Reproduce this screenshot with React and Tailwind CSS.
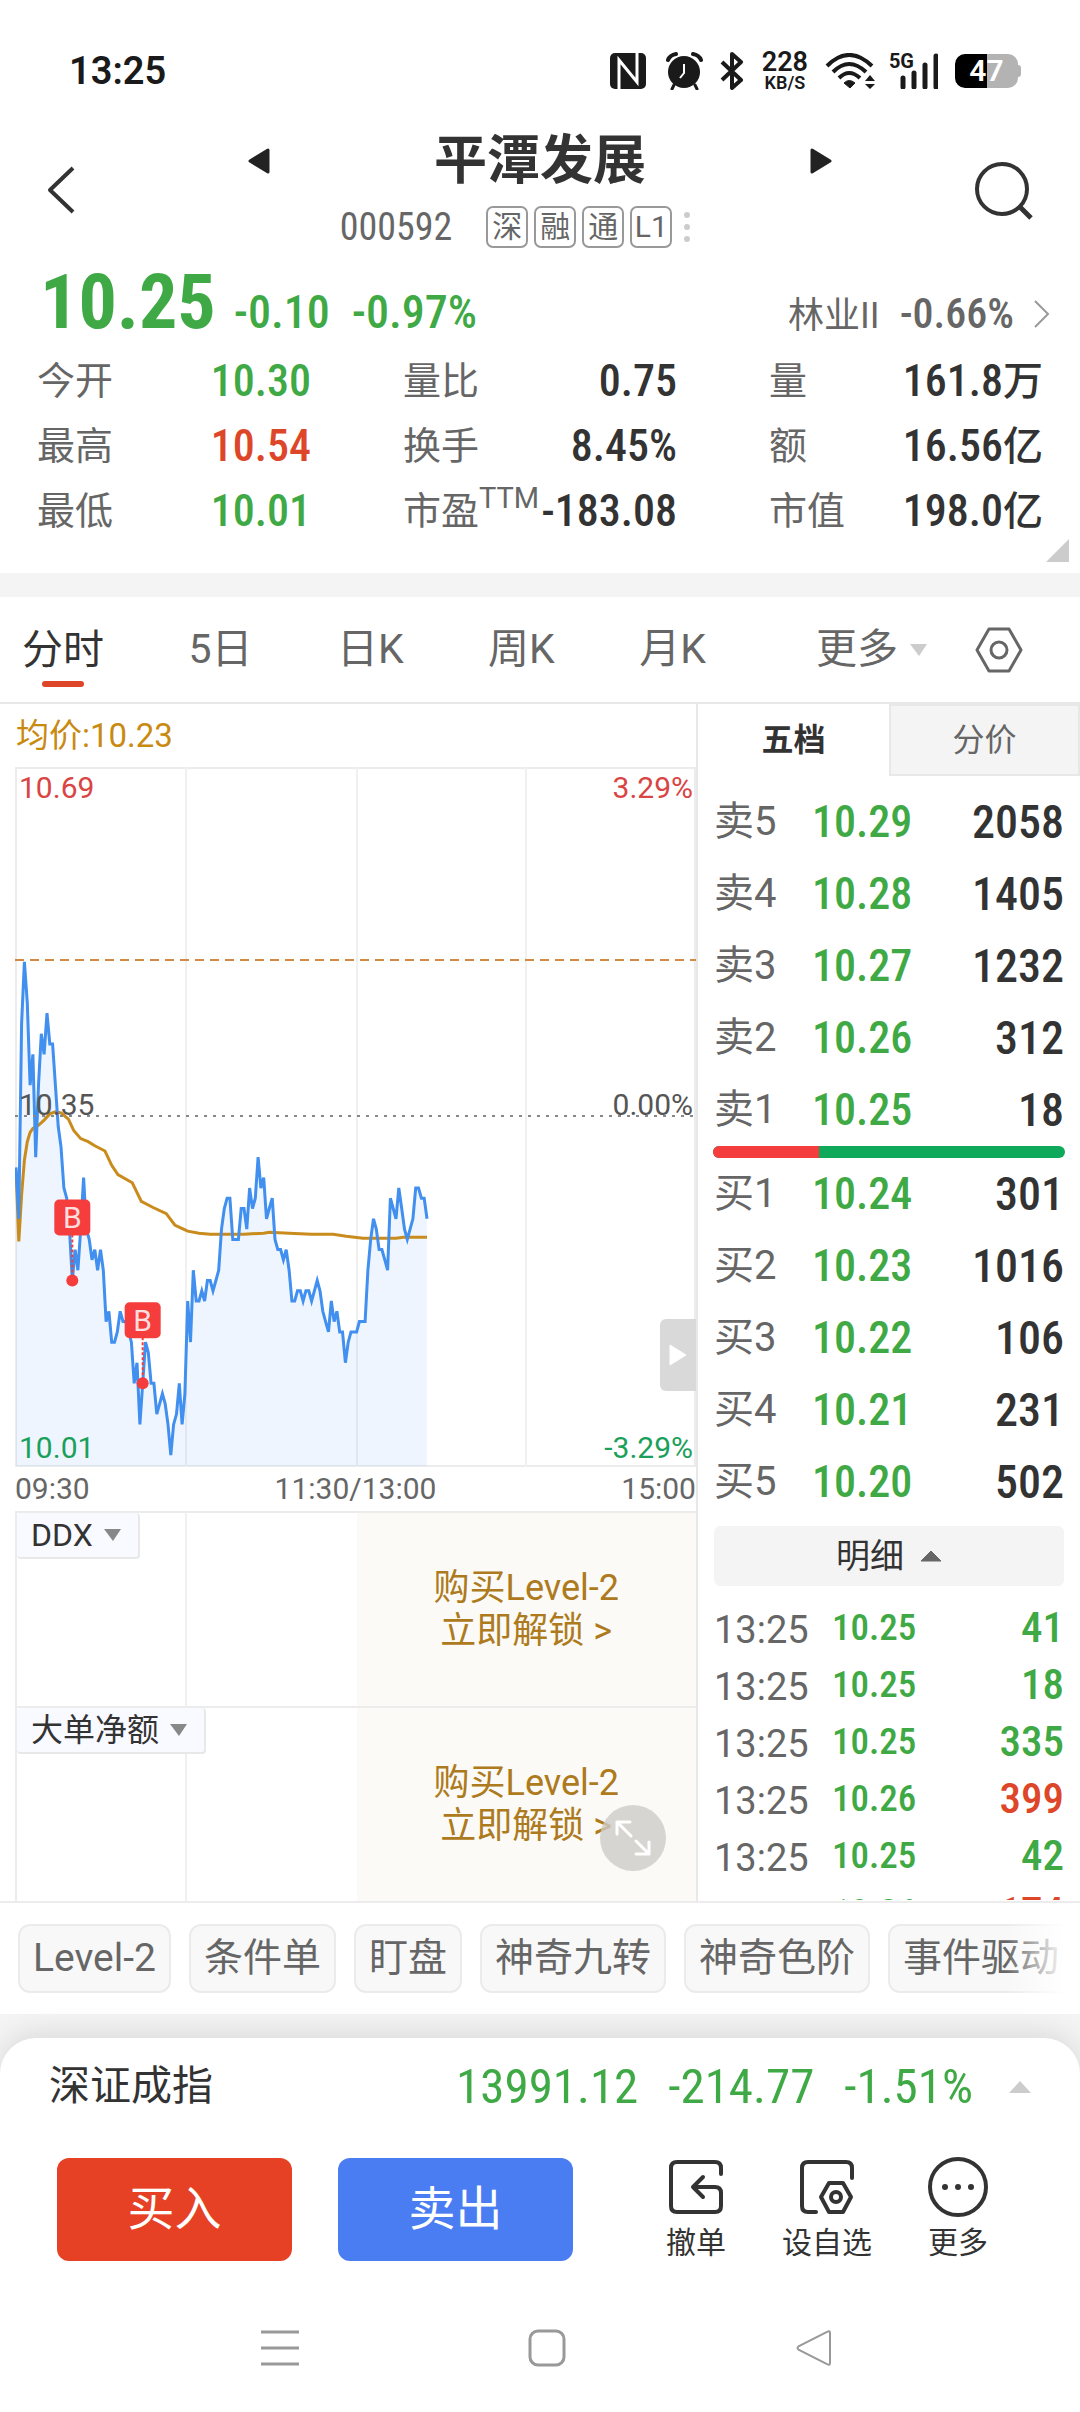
import React from 'react';

const SELLS = [
    { label: '卖5', price: '10.29', volume: '2058' },
    { label: '卖4', price: '10.28', volume: '1405' },
    { label: '卖3', price: '10.27', volume: '1232' },
    { label: '卖2', price: '10.26', volume: '312' },
    { label: '卖1', price: '10.25', volume: '18' },
];

const BUYS = [
    { label: '买1', price: '10.24', volume: '301' },
    { label: '买2', price: '10.23', volume: '1016' },
    { label: '买3', price: '10.22', volume: '106' },
    { label: '买4', price: '10.21', volume: '231' },
    { label: '买5', price: '10.20', volume: '502' },
];

const TICKS = [
    { time: '13:25', price: '10.25', volume: '41', up: false },
    { time: '13:25', price: '10.25', volume: '18', up: false },
    { time: '13:25', price: '10.25', volume: '335', up: false },
    { time: '13:25', price: '10.26', volume: '399', up: true },
    { time: '13:25', price: '10.25', volume: '42', up: false },
    { time: '13:25', price: '10.26', volume: '174', up: true },
];

const STATS = [
    { label: '今开', value: '10.30', color: 'text-[#3fa945]' },
    { label: '量比', value: '0.75', color: 'text-[#333]' },
    { label: '量', value: '161.8', unit: '万', color: 'text-[#333]' },
    { label: '最高', value: '10.54', color: 'text-[#dd4628]' },
    { label: '换手', value: '8.45%', color: 'text-[#333]' },
    { label: '额', value: '16.56', unit: '亿', color: 'text-[#333]' },
    { label: '最低', value: '10.01', color: 'text-[#3fa945]' },
    { label: '市盈', sup: 'TTM', value: '-183.08', color: 'text-[#333]' },
    { label: '市值', value: '198.0', unit: '亿', color: 'text-[#333]' },
];

const CHIPS = ['Level-2', '条件单', '盯盘', '神奇九转', '神奇色阶', '事件驱动'];

// one price per minute, in cents above 10.00
const PRICES = [
    30, 25, 44, 50, 46, 38, 41, 31, 38, 43, 41, 45, 42, 42, 38, 34, 32, 28, 27, 24,
    19, 22, 20, 24, 29, 24, 23, 21, 22, 20, 22, 20, 15, 16, 13, 13, 14, 16, 15, 15,
    14, 13, 9, 11, 5, 9, 13, 12, 9, 9, 6, 7, 8, 7, 5, 2, 5, 6, 9, 5,
    8, 17, 13, 20, 17, 17, 18, 17, 19, 19, 18, 19, 20, 24, 26, 27, 27, 23, 23, 23,
    26, 26, 24, 28, 26, 27, 31, 28, 29, 25, 26, 27, 23, 22, 22, 21, 22, 20, 17, 17,
    18, 18, 17, 18, 18, 17, 18, 19, 18, 16, 15, 14, 17, 15, 16, 14, 14, 11, 13, 14,
    14, 14, 15, 15, 15, 20, 23, 25, 24, 22, 22, 21, 20, 27, 26, 25, 28, 26, 24, 23,
    24, 25, 28, 28, 27, 27, 25,
];

// [minute, cents above 10.00]
const AVERAGES = [
    [0, 29.8], [1, 22.8], [2, 27.3], [3, 30.7], [4, 32.5], [5, 33.4], [6, 33.8], [8, 34.1], [10, 34.6],
    [12, 35.2], [14, 35.4], [16, 35.3], [18.6, 34.7], [20.5, 33.6], [23, 32.8], [25.6, 32.5], [28, 32.1],
    [31.6, 31.6], [34, 30.2], [36.2, 29.3], [41.3, 28.5], [44.5, 26.7], [48.7, 26.1], [53.4, 25.5],
    [56.4, 24.4], [58.7, 24.1], [61, 23.8], [65, 23.6], [69, 23.5], [81, 23.5], [88, 23.6], [90, 23.7],
    [97, 23.6], [105, 23.5], [112.6, 23.5], [117.3, 23.3], [123.3, 23.1], [135, 23.1], [137.5, 23.2], [146, 23.2],
];

const chartX = (minute) => 1 + minute * 2.815;
const chartY = (cents) => 349 + (35 - cents) * 10.28;

const toPoints = (list) => list.map(([m, c]) => `${chartX(m).toFixed(1)},${chartY(c).toFixed(1)}`).join(' ');

const NUM = "font-['Roboto_Condensed','Liberation_Sans_Narrow',Roboto,sans-serif]";

const StatusBar = () => (
    <div className="flex h-[131px] items-center justify-between pt-[10px] pl-[69px] pr-[59px] text-[#1a1a1a]">
        <span className="text-[38px] font-semibold leading-none">13:25</span>
        <div className="flex items-center">
            <svg width="36" height="36" viewBox="0 0 36 36">
                <rect width="36" height="36" rx="5" fill="#1a1a1a" />
                <path d="M9 36V7l18 22V0" fill="none" stroke="#fff" strokeWidth="3" />
            </svg>
            <svg className="ml-5" width="37" height="38" viewBox="0 0 37 38">
                <circle cx="18" cy="20" r="16" fill="#1a1a1a" />
                <path d="M2 8Q4 3 10 2M35 8Q33 3 27 2" fill="none" stroke="#1a1a1a" strokeWidth="4" strokeLinecap="round" />
                <path d="M8 33l-2 4M29 33l2 4" stroke="#1a1a1a" strokeWidth="3" strokeLinecap="round" />
                <path d="M18 12v9l-4 5" fill="none" stroke="#fff" strokeWidth="2" />
            </svg>
            <svg className="ml-[17px]" width="24" height="38" viewBox="0 0 24 38">
                <path d="M2 10l19 18-9 8V2l9 8L2 28" fill="none" stroke="#1a1a1a" strokeWidth="4" strokeLinejoin="round" />
            </svg>
            <div className="ml-[16px] flex w-[50px] flex-col items-center">
                <span className="text-[27px] font-semibold leading-[24px]">228</span>
                <span className="text-[18px] font-semibold leading-[18px]">KB/S</span>
            </div>
            <svg className="ml-[15px]" width="52" height="36" viewBox="0 0 52 36">
                <g fill="none" stroke="#1a1a1a" strokeWidth="4">
                    <path d="M2 13Q24 -9 47 13" />
                    <path d="M8 19Q24 3 41 19" />
                    <path d="M14 25Q24 15 35 25" />
                </g>
                <path d="M19 30q5-5 11 0l-5 5z" fill="#1a1a1a" stroke="#1a1a1a" />
                <path d="M45 22l5 6h-10zM45 36l5-5h-10z" fill="#1a1a1a" />
            </svg>
            <div className="ml-[12px] flex items-start">
                <span className="text-[20px] font-bold leading-[16px]">5G</span>
                <svg className="-ml-[14px]" width="38" height="36" viewBox="0 0 38 36">
                    <path d="M3 25v9M14 20v14M25 12v22M36 3v31" stroke="#1a1a1a" strokeWidth="5" strokeLinecap="round" />
                </svg>
            </div>
            <div className="ml-[17px] flex items-center">
                <div className="flex h-[34px] w-[63px] items-center justify-center rounded-[10px] bg-linear-to-r from-black from-50% to-[#b3b3b3] to-50% text-[30px] font-semibold leading-none text-white">
                    47
                </div>
                <div className="h-3 w-[3px] rounded-r bg-[#b3b3b3]" />
            </div>
        </div>
    </div>
);

const Header = () => (
    <header className="flex items-center justify-between px-[47px]">
        <button type="button" aria-label="返回" className="w-[60px]">
            <svg width="28" height="48" viewBox="0 0 28 48">
                <path d="M26 2L3 24l23 22" fill="none" stroke="#333" strokeWidth="4" strokeLinejoin="round" />
            </svg>
        </button>
        <div className="w-[584px]">
            <div className="flex items-center justify-between">
                <button type="button" aria-label="上一只">
                    <svg width="22" height="26" viewBox="0 0 22 26">
                        <path d="M20 2v22L2 13z" fill="#222" stroke="#222" strokeWidth="3" strokeLinejoin="round" />
                    </svg>
                </button>
                <h1 className="text-[53px] font-bold leading-[60px] text-[#333]">平潭发展</h1>
                <button type="button" aria-label="下一只">
                    <svg width="22" height="26" viewBox="0 0 22 26">
                        <path d="M2 2v22l18-11z" fill="#222" stroke="#222" strokeWidth="3" strokeLinejoin="round" />
                    </svg>
                </button>
            </div>
            <div className="mt-[15px] flex items-center justify-center pr-[50px] text-[#666]">
                <span className={`${NUM} mr-[34px] text-[38px] leading-[42px]`}>000592</span>
                <div className="flex gap-[6px]">
                    {['深', '融', '通', 'L1'].map((tag) => (
                        <span key={tag} className="flex h-[42px] w-[42px] items-center justify-center rounded-[7px] border-2 border-[#999] text-[30px] leading-none">
                            {tag}
                        </span>
                    ))}
                </div>
                <div className="ml-3 flex flex-col gap-[6px]">
                    <i className="h-[6px] w-[6px] rounded-full bg-[#ccc]" />
                    <i className="h-[6px] w-[6px] rounded-full bg-[#ccc]" />
                    <i className="h-[6px] w-[6px] rounded-full bg-[#ccc]" />
                </div>
            </div>
        </div>
        <button type="button" aria-label="搜索">
            <svg width="60" height="60" viewBox="0 0 60 60">
                <circle cx="29" cy="29" r="25" fill="none" stroke="#333" strokeWidth="4" />
                <path d="M46 46l12 12" stroke="#333" strokeWidth="5" />
            </svg>
        </button>
    </header>
);

const Quote = () => (
    <section className="mt-[14px]">
        <div className="flex h-[80px] items-baseline justify-between pl-[40px] pr-[30px] leading-[80px]">
            <div className={`${NUM} flex items-baseline text-[#3fa945]`}>
                <span className="text-[76px] font-bold">10.25</span>
                <span className="ml-[18px] text-[46px] font-medium">-0.10</span>
                <span className="ml-[22px] text-[46px] font-medium">-0.97%</span>
            </div>
            <a href="#sector" className="flex items-baseline text-[#666]">
                <span className="text-[36px]">林业II</span>
                <span className={`${NUM} ml-[20px] text-[42px] font-medium`}>-0.66%</span>
                <svg className="ml-[18px]" width="18" height="28" viewBox="0 0 18 28">
                    <path d="M3 1l13 13L3 27" fill="none" stroke="#999" strokeWidth="2" />
                </svg>
            </a>
        </div>
        <dl className="mt-[7px] grid grid-cols-3 gap-x-[92px] px-[37px]">
            {STATS.map((item) => (
                <div key={item.label} className="flex h-[65px] items-center justify-between whitespace-nowrap leading-[65px]">
                    <dt className="flex text-[38px] text-[#666]">
                        {item.label}
                        {item.sup && <span className="text-[29px] leading-[38px]">{item.sup}</span>}
                    </dt>
                    <dd className={`flex items-center font-medium ${item.color}`}>
                        <span className={`${NUM} text-[44px]`}>{item.value}</span>
                        {item.unit && <span className="text-[40px]">{item.unit}</span>}
                    </dd>
                </div>
            ))}
        </dl>
        <div className="flex h-[29px] justify-end pr-[11px]">
            <svg className="-mt-[5px]" width="23" height="23" viewBox="0 0 23 23">
                <path d="M23 0v23H0z" fill="#ccc" />
            </svg>
        </div>
    </section>
);

const PeriodTabs = () => (
    <nav className="flex h-[107px] items-center justify-between border-b-2 border-[#e8e8e8] pl-[22px] pr-[57px] text-[41px] text-[#666]">
        <div className="flex w-[684px] justify-between">
            <button type="button" className="relative leading-[60px] text-[#333]">
                分时
                <span className="absolute -bottom-[7px] left-[20px] h-[6px] w-[42px] rounded-full bg-[#dd4628]" />
            </button>
            <button type="button">5日</button>
            <button type="button">日K</button>
            <button type="button">周K</button>
            <button type="button">月K</button>
        </div>
        <div className="flex items-center">
            <button type="button" className="flex items-center gap-[12px]">
                更多
                <svg width="17" height="12" viewBox="0 0 17 12">
                    <path d="M0 0h17l-8 12z" fill="#ccc" />
                </svg>
            </button>
            <button type="button" aria-label="设置" className="ml-[48px]">
                <svg width="48" height="46" viewBox="0 0 48 46">
                    <path d="M14 2h20l12 21-12 21H14L2 23z" fill="none" stroke="#666" strokeWidth="3" strokeLinejoin="round" />
                    <circle cx="24" cy="23" r="8" fill="none" stroke="#666" strokeWidth="3" />
                </svg>
            </button>
        </div>
    </nav>
);

const BuyMarker = ({ minute, cents }) => {
    const x = chartX(minute);
    const y = chartY(cents);
    return (
        <g>
            <line x1={x} x2={x} y1={y - 46} y2={y} stroke="#f53d3d" strokeWidth="2" strokeDasharray="3 2" />
            <rect x={x - 18} y={y - 81} width="36" height="36" rx="5" fill="#f53d3d" />
            <text x={x} y={y - 52} textAnchor="middle" fontSize="30" fill="#fddede">B</text>
            <circle cx={x} cy={y} r="6" fill="#f53d3d" />
        </g>
    );
};

const PriceChart = () => {
    const line = toPoints(PRICES.map((c, m) => [m, c]));
    const lastX = chartX(PRICES.length - 1);
    return (
        <div className="relative ml-[15px] text-[30px] leading-[36px]">
            <svg className="block h-auto w-full" viewBox="0 0 681 700">
                <path d="M0 1H681M0 699H681M1 0V700M680 0V700" stroke="#ececec" strokeWidth="2" />
                <path d="M171 0V700M342 0V700M511 0V700" stroke="#f0f0f0" strokeWidth="2" />
                <path d="M0 193H681" stroke="#d08a45" strokeWidth="2" strokeDasharray="9 6" />
                <polygon points={`1,699 ${line} ${lastX},699`} fill="#3f8fef" fillOpacity="0.09" />
                <polyline points={toPoints(AVERAGES)} fill="none" stroke="#c98c1c" strokeWidth="3" />
                <polyline points={line} fill="none" stroke="#418fef" strokeWidth="3" />
                <path d="M0 349H681" stroke="#888" strokeWidth="2" strokeDasharray="3 6" />
                <BuyMarker minute={20} cents={19} />
                <BuyMarker minute={45} cents={9} />
            </svg>
            <span className="absolute left-[4px] top-[3px] text-[#d94444]">10.69</span>
            <span className="absolute right-[3px] top-[3px] text-[#d94444]">3.29%</span>
            <span className="absolute left-[4px] top-[320px] text-[#555]">10.35</span>
            <span className="absolute right-[3px] top-[320px] text-[#555]">0.00%</span>
            <span className="absolute bottom-[1px] left-[4px] text-[#1aa05a]">10.01</span>
            <span className="absolute bottom-[1px] right-[3px] text-[#1aa05a]">-3.29%</span>
            <button type="button" aria-label="展开" className="absolute right-0 top-[552px] flex h-[72px] w-[36px] items-center justify-center rounded-l-[6px] bg-[#d9d9d9]">
                <svg width="18" height="22" viewBox="0 0 18 22">
                    <path d="M1 1v20l16-10z" fill="#fff" stroke="#fff" strokeLinejoin="round" />
                </svg>
            </button>
        </div>
    );
};

const LockedPanel = ({ name, children }) => (
    <div className="relative ml-[15px] grid h-[195px] grid-cols-4 border-l-2 border-t-2 border-[#ececec]">
        <div className="border-r-2 border-[#f0f0f0]">
            <button type="button" className="relative flex h-[46px] items-center gap-[11px] whitespace-nowrap rounded-[4px] border-2 border-t-0 border-l-0 border-[#e8e8e8] bg-[#f9faff] pl-[14px] pr-[17px] text-[32px] leading-none text-[#333]">
                {name}
                <svg width="17" height="12" viewBox="0 0 17 12">
                    <path d="M0 0h17l-8 12z" fill="#888" />
                </svg>
            </button>
        </div>
        <div />
        <a href="#level2" className="col-span-2 flex flex-col justify-center bg-[#fbfaf6] text-center text-[36px] leading-[43px] text-[#ad7a20]">
            <span>购买Level-2</span>
            <span>立即解锁 &gt;</span>
        </a>
        {children}
    </div>
);

const BookTable = ({ rows, caption }) => (
    <table className="w-full" aria-label={caption}>
        <tbody>
            {rows.map((row) => (
                <tr key={row.label} className="h-[72px]">
                    <th scope="row" className="w-[98px] text-left text-[40px] font-normal leading-none text-[#666]">{row.label}</th>
                    <td className={`${NUM} text-[44px] font-medium leading-none text-[#3fa945]`}>{row.price}</td>
                    <td className={`${NUM} text-right text-[46px] font-medium leading-none text-[#333]`}>{row.volume}</td>
                </tr>
            ))}
        </tbody>
    </table>
);

const OrderBook = () => (
    <aside>
        <div className="grid h-[72px] grid-cols-2 text-[32px]">
            <button type="button" className="font-bold text-[#333]">五档</button>
            <button type="button" className="border-2 border-[#e8e8e8] bg-[#f4f4f4] text-[#666]">分价</button>
        </div>
        <div className="pl-[15px] pr-[15px] pt-[10px]">
            <div className="px-[1px]">
                <BookTable rows={SELLS} caption="卖盘" />
            </div>
            <div className="flex h-[12px] overflow-hidden rounded-full bg-[#0ea95a]">
                <div className="w-[30%] bg-[#f53d3d]" />
            </div>
            <div className="px-[1px]">
                <BookTable rows={BUYS} caption="买盘" />
                <button type="button" className="mt-[8px] flex h-[60px] w-full items-center justify-center gap-[16px] rounded-[6px] bg-[#f4f4f4] text-[34px] leading-none text-[#333]">
                    明细
                    <svg width="22" height="12" viewBox="0 0 22 12">
                        <path d="M11 1l10 10H1z" fill="#666" stroke="#666" strokeLinejoin="round" />
                    </svg>
                </button>
                <div className="mt-[13px] h-[301px] overflow-hidden">
                    <table className="w-full" aria-label="成交明细">
                        <tbody>
                            {TICKS.map((tick, i) => (
                                <tr key={i} className="h-[57px]">
                                    <td className="w-[118px] pt-1 text-[38px] leading-none text-[#666]">{tick.time}</td>
                                    <td className={`${NUM} text-[37px] font-medium leading-none text-[#3fa945]`}>{tick.price}</td>
                                    <td className={`${NUM} text-right text-[43px] font-medium leading-none ${tick.up ? 'text-[#dd4628]' : 'text-[#3fa945]'}`}>
                                        {tick.volume}
                                    </td>
                                </tr>
                            ))}
                        </tbody>
                    </table>
                </div>
            </div>
        </div>
    </aside>
);

const ChipBar = () => (
    <div className="relative mr-[14px] flex gap-[18px] overflow-hidden pt-[21px] pb-[21px] pl-[18px]">
        {CHIPS.map((chip) => (
            <button key={chip} type="button" className="h-[69px] shrink-0 rounded-[12px] border-2 border-[#ebebeb] bg-[#f8f8f8] px-[13px] text-[39px] leading-none text-[#666]">
                {chip}
            </button>
        ))}
        <div className="absolute inset-y-0 right-0 w-[60px] bg-linear-to-r from-transparent to-white" />
    </div>
);

const TradeBar = () => (
    <footer className="rounded-t-[36px] bg-white shadow-[0_-6px_28px_rgba(0,0,0,0.1)]">
        <div className="flex h-[98px] items-center pl-[49px] pr-[49px]">
            <span className="mr-auto text-[41px] text-[#333]">深证成指</span>
            <div className={`${NUM} flex gap-[30px] text-[49px] text-[#3fa945]`}>
                <span>13991.12</span>
                <span>-214.77</span>
                <span>-1.51%</span>
            </div>
            <svg className="ml-[36px]" width="22" height="12" viewBox="0 0 22 12">
                <path d="M11 0l11 12H0z" fill="#ccc" />
            </svg>
        </div>
        <div className="mt-[21px] flex items-center pl-[57px] pr-[92px]">
            <button type="button" className="h-[103px] w-[235px] rounded-[12px] bg-[#e64124] text-[47px] text-white">买入</button>
            <button type="button" className="ml-[46px] h-[103px] w-[235px] rounded-[12px] bg-[#4b7df2] text-[47px] text-white">卖出</button>
            <div className="ml-auto flex gap-[56px] text-[30px] leading-[36px] text-[#333]">
                <button type="button" className="flex flex-col items-center gap-[8px]">
                    <svg width="60" height="60" viewBox="0 0 60 60" fill="none" stroke="#333" strokeWidth="4" strokeLinecap="round" strokeLinejoin="round">
                        <path d="M55 17v-6q0-6-6-6H11q-6 0-6 6v38q0 6 6 6h38q6 0 6-6V36q0-6-6-6H29" />
                        <path d="M37 20l-10 10 10 10" />
                    </svg>
                    撤单
                </button>
                <button type="button" className="flex flex-col items-center gap-[8px]">
                    <svg width="60" height="60" viewBox="0 0 60 60" fill="none" stroke="#333" strokeWidth="4" strokeLinecap="round" strokeLinejoin="round">
                        <path d="M55 21V11q0-6-6-6H11q-6 0-6 6v38q0 6 6 6h8" />
                        <path d="M32 26h14l8 14-8 15H32l-8-15z" />
                        <circle cx="39" cy="40" r="5" />
                    </svg>
                    设自选
                </button>
                <button type="button" className="flex flex-col items-center gap-[8px]">
                    <svg width="60" height="60" viewBox="0 0 60 60">
                        <circle cx="30" cy="30" r="28" fill="none" stroke="#333" strokeWidth="4" />
                        <circle cx="17" cy="30" r="3" fill="#333" />
                        <circle cx="30" cy="30" r="3" fill="#333" />
                        <circle cx="43" cy="30" r="3" fill="#333" />
                    </svg>
                    更多
                </button>
            </div>
        </div>
        <div className="flex items-center justify-center gap-[229px] pb-[48px] pl-[14px] pt-[68px]">
            <button type="button" aria-label="最近任务">
                <svg width="38" height="38" viewBox="0 0 38 38">
                    <path d="M0 3h38M0 19h38M0 35h38" stroke="#999" strokeWidth="3" />
                </svg>
            </button>
            <button type="button" aria-label="主屏幕">
                <svg width="38" height="38" viewBox="0 0 38 38">
                    <rect x="2" y="2" width="34" height="34" rx="8" fill="none" stroke="#999" strokeWidth="3" />
                </svg>
            </button>
            <button type="button" aria-label="后退">
                <svg width="38" height="38" viewBox="0 0 38 38">
                    <path d="M35 4v30q0 3-3 1L4 21q-3-2 0-4L32 3q3-2 3 1z" fill="none" stroke="#999" strokeWidth="2" />
                </svg>
            </button>
        </div>
    </footer>
);

const App = () => {
    return (
        <div className="bg-white font-[Roboto,'Noto_Sans_CJK_SC',sans-serif]">
            <StatusBar />
            <Header />
            <Quote />
            <div className="h-6 bg-[#f4f4f4]" />
            <PeriodTabs />

            {/* Chart on the left, order book on the right */}
            <main className="grid grid-cols-[698fr_382fr] border-b-2 border-[#ececec]">
                <div className="border-r-2 border-[#e8e8e8]">
                    <p className="pl-[16px] text-[33px] leading-[63px] text-[#c98a12]">均价:10.23</p>
                    <PriceChart />
                    <div className="flex justify-between pl-[15px] text-[30px] leading-[44px] text-[#666]">
                        <span>09:30</span>
                        <span>11:30/13:00</span>
                        <span>15:00</span>
                    </div>
                    <LockedPanel name="DDX" />
                    <LockedPanel name="大单净额">
                        <button type="button" aria-label="全屏" className="absolute bottom-[30px] right-[30px] flex h-[66px] w-[66px] items-center justify-center rounded-full bg-[#cdccc8]/80">
                            <svg width="36" height="36" viewBox="0 0 36 36" fill="none" stroke="#fff" strokeWidth="3" strokeLinecap="round" strokeLinejoin="round">
                                <path d="M2 14V2h13M2 2l14 14M34 22v12H21M34 34L21 21" />
                            </svg>
                        </button>
                    </LockedPanel>
                </div>
                <OrderBook />
            </main>

            <ChipBar />
            <div className="bg-[#f4f4f4] pt-6">
                <TradeBar />
            </div>
        </div>
    );
};

export default App;
